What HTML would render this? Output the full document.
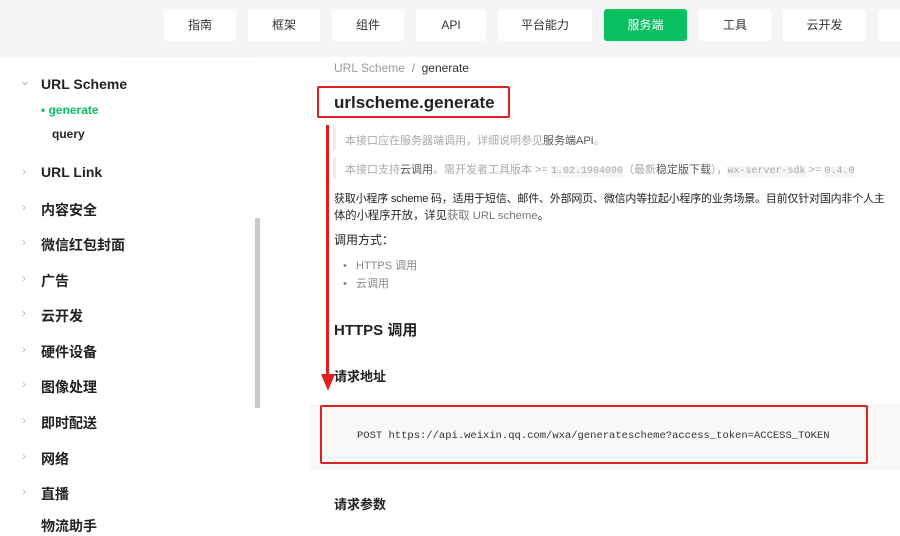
<!DOCTYPE html>
<html><head><meta charset="utf-8"><style>
*{margin:0;padding:0;box-sizing:border-box}
body{width:900px;height:525px;overflow:hidden;background:#fff;font-family:"Liberation Sans","Noto Sans CJK SC",sans-serif;position:relative;color:#222}
.a{position:absolute;white-space:nowrap}
.hdr{position:absolute;left:0;top:0;width:900px;height:57px;background:#f5f5f5}
.btn{position:absolute;top:9px;height:32px;background:#fff;border-radius:3px;font-size:12px;line-height:32px;text-align:center;color:#333}
.btn.on{background:#07c160;color:#fff}
.side{font-size:14px;font-weight:bold;color:#222}
.ch{position:absolute;left:22px;color:#bbb;font-size:12px}
</style></head><body>
<div class="hdr"></div>
<div class="btn" style="left:164px;width:72px">指南</div>
<div class="btn" style="left:248px;width:72px">框架</div>
<div class="btn" style="left:332px;width:72px">组件</div>
<div class="btn" style="left:416px;width:70px">API</div>
<div class="btn" style="left:498px;width:94px">平台能力</div>
<div class="btn on" style="left:604px;width:83px">服务端</div>
<div class="btn" style="left:699px;width:72px">工具</div>
<div class="btn" style="left:783px;width:83px">云开发</div>
<div class="btn" style="left:878px;width:40px"></div>

<div class="a" style="left:120px;top:57px;width:135px;height:468px;background:#fdfdfd"></div>
<div class="a" style="left:255px;top:218px;width:5px;height:190px;background:#c8c8c8"></div>

<div class="a side" style="left:41px;top:76px">URL Scheme</div>
<div class="a" style="left:20px;top:74px;color:#aaa;font-size:12px">⌄</div>
<div class="a" style="left:41px;top:103px;font-size:12px;font-weight:bold;color:#07c160">• generate</div>
<div class="a" style="left:52px;top:127px;font-size:12px;font-weight:bold">query</div>
<div class="a side" style="left:41px;top:164px">URL Link</div>
<div class="a side" style="left:41px;top:200px">内容安全</div>
<div class="a side" style="left:41px;top:235px">微信红包封面</div>
<div class="a side" style="left:41px;top:271px">广告</div>
<div class="a side" style="left:41px;top:306px">云开发</div>
<div class="a side" style="left:41px;top:342px">硬件设备</div>
<div class="a side" style="left:41px;top:377px">图像处理</div>
<div class="a side" style="left:41px;top:413px">即时配送</div>
<div class="a side" style="left:41px;top:449px">网络</div>
<div class="a side" style="left:41px;top:484px">直播</div>
<div class="a side" style="left:41px;top:516px">物流助手</div>
<div class="ch" style="top:164px">›</div>
<div class="ch" style="top:200px">›</div>
<div class="ch" style="top:235px">›</div>
<div class="ch" style="top:271px">›</div>
<div class="ch" style="top:306px">›</div>
<div class="ch" style="top:342px">›</div>
<div class="ch" style="top:377px">›</div>
<div class="ch" style="top:413px">›</div>
<div class="ch" style="top:449px">›</div>
<div class="ch" style="top:484px">›</div>

<div class="a" style="left:334px;top:61px;font-size:12px;color:#999">URL Scheme &nbsp;/&nbsp; <span style="color:#333">generate</span></div>
<div class="a" style="left:317px;top:86px;width:193px;height:32px;border:2px solid #e02020;border-radius:2px"></div>
<div class="a" style="left:334px;top:93px;font-size:17px;font-weight:bold">urlscheme.generate</div>

<div class="a" style="left:333px;top:128px;width:3px;height:22px;background:#eee"></div>
<div class="a" style="left:345px;top:132px;font-size:11px;color:#aaa">本接口应在服务器端调用，详细说明参见<span style="color:#555">服务端API</span>。</div>
<div class="a" style="left:333px;top:157px;width:3px;height:22px;background:#eee"></div>
<div class="a" style="left:345px;top:161px;font-size:11px;color:#aaa">本接口支持<span style="color:#555">云调用</span>。需开发者工具版本 &gt;= <span style="background:#f5f5f5;font-family:'Liberation Mono',monospace;font-size:10px">1.02.1904090</span>（最新<span style="color:#555">稳定版下载</span>），<span style="background:#f5f5f5;font-family:'Liberation Mono',monospace;font-size:10px">wx-server-sdk</span> &gt;= <span style="background:#f5f5f5;font-family:'Liberation Mono',monospace;font-size:10px">0.4.0</span></div>
<div class="a" style="left:334px;top:190px;font-size:11px;color:#222;letter-spacing:-0.2px">获取小程序 scheme 码，适用于短信、邮件、外部网页、微信内等拉起小程序的业务场景。目前仅针对国内非个人主</div>
<div class="a" style="left:334px;top:207px;font-size:11.3px;color:#222">体的小程序开放，详见<span style="color:#777">获取 URL scheme</span>。</div>
<div class="a" style="left:334px;top:231px;font-size:12px">调用方式：</div>
<div class="a" style="left:343px;top:257px;font-size:11px;color:#888">•&nbsp;&nbsp; HTTPS 调用</div>
<div class="a" style="left:343px;top:275px;font-size:11px;color:#888">•&nbsp;&nbsp; 云调用</div>

<div class="a" style="left:334px;top:319px;font-size:15px;font-weight:bold">HTTPS 调用</div>
<div class="a" style="left:334px;top:366px;font-size:13px;font-weight:bold">请求地址</div>

<div class="a" style="left:310px;top:404px;width:590px;height:66px;background:#f8f8f8"></div>
<div class="a" style="left:320px;top:405px;width:548px;height:59px;border:2px solid #e02020;border-radius:2px"></div>
<div class="a" style="left:357px;top:430px;font-size:10.5px;font-family:'Liberation Mono',monospace;color:#333">POST https://api.weixin.qq.com/wxa/generatescheme?access_token=ACCESS_TOKEN</div>

<div class="a" style="left:334px;top:494px;font-size:13px;font-weight:bold">请求参数</div>

<div class="a" style="left:326px;top:125px;width:3px;height:255px;background:#e02020"></div>
<svg class="a" style="left:320px;top:374px" width="16" height="18"><polygon points="1,0 15,0 8,17" fill="#e02020"/></svg>
</body></html>
